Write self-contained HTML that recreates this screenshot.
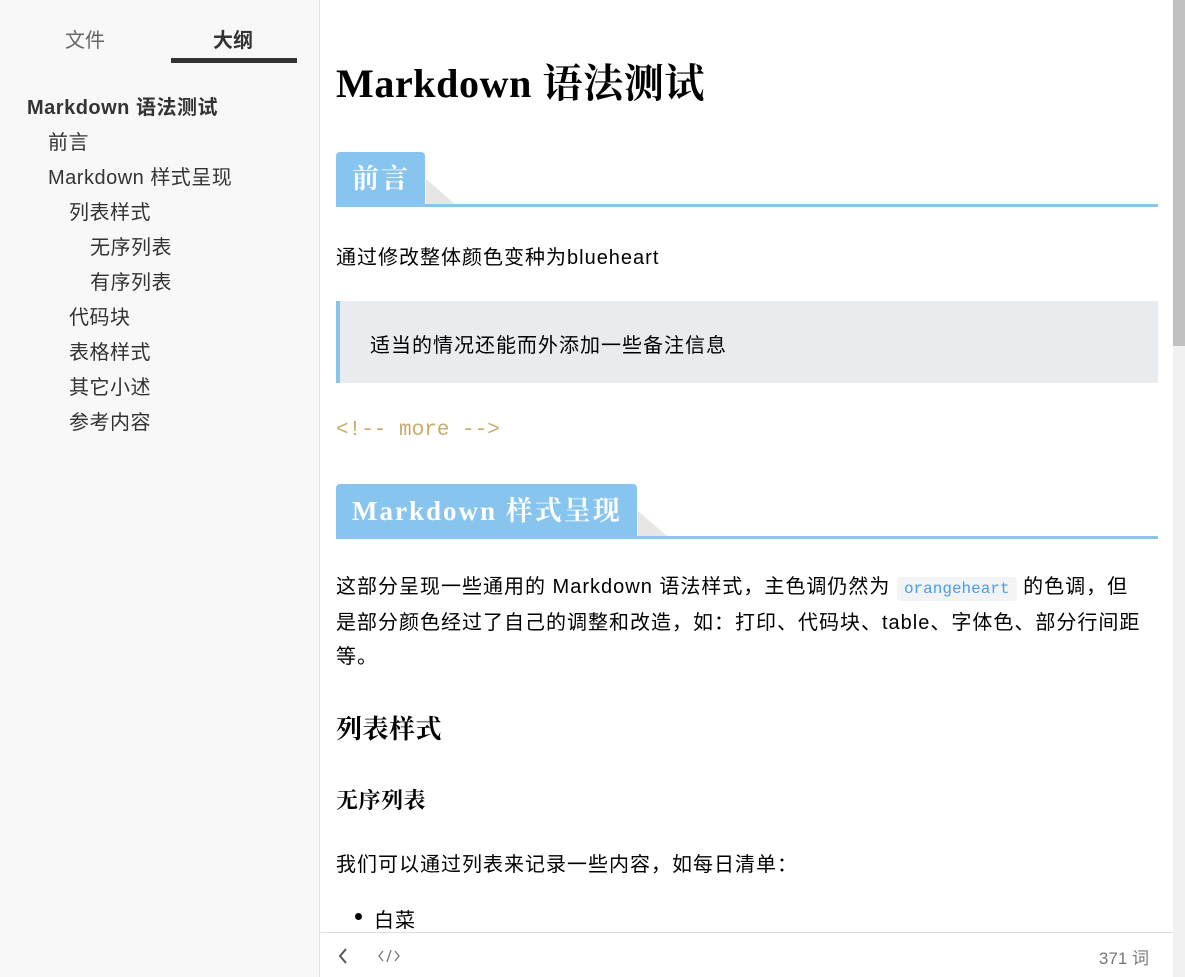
<!DOCTYPE html>
<html><head><meta charset="utf-8"><style>
*{margin:0;padding:0;box-sizing:border-box}
body{width:1185px;height:977px;overflow:hidden;background:#fff;font-family:"Liberation Sans","Noto Sans CJK SC",sans-serif;position:relative}
#side{position:absolute;left:0;top:0;width:320px;height:977px;background:#f8f8f8;border-right:1px solid #e5e5e5}
.tab{position:absolute;top:24px;font-size:20px;color:#666}
.ol{position:absolute;font-size:20px;color:#333;white-space:nowrap;letter-spacing:0.5px}
#main{position:absolute;left:321px;top:0;width:852px;height:932px;overflow:hidden}
.a{position:absolute;white-space:nowrap;font-size:20px;color:#000;letter-spacing:1px}
.hw{position:absolute;left:15px;display:flex;align-items:flex-end}
.h2{background:#87c4ee;color:#fff;font-family:"Liberation Serif","Noto Serif CJK SC",serif;font-weight:bold;font-size:27px;letter-spacing:2px;border-radius:4px 4px 0 0;padding:0 15px 0 16px;height:53px;line-height:55px;white-space:nowrap}
.line{position:absolute;left:15px;width:822px;height:3px;background:#87c4ee}
.tri{width:0;height:0;border-left:30px solid #e8e6e3;border-top:26px solid transparent;margin-left:1px}
#foot{position:absolute;left:321px;top:932px;width:852px;height:45px;border-top:1px solid #ddd;background:#fff}
#sb{position:absolute;left:1173px;top:0;width:12px;height:977px;background:#f1f1f1}
</style></head><body>
<div id="side">
<div class="tab" style="left:65px">文件</div>
<div class="tab" style="left:213px;color:#333;font-weight:bold">大纲</div>
<div style="position:absolute;left:171px;top:58px;width:126px;height:5px;background:#333"></div>
<div class="ol" style="left:27px;top:91px;font-weight:bold">Markdown 语法测试</div>
<div class="ol" style="left:48px;top:126px">前言</div>
<div class="ol" style="left:48px;top:161px">Markdown 样式呈现</div>
<div class="ol" style="left:69px;top:196px">列表样式</div>
<div class="ol" style="left:90px;top:231px">无序列表</div>
<div class="ol" style="left:90px;top:266px">有序列表</div>
<div class="ol" style="left:69px;top:301px">代码块</div>
<div class="ol" style="left:69px;top:336px">表格样式</div>
<div class="ol" style="left:69px;top:371px">其它小述</div>
<div class="ol" style="left:69px;top:406px">参考内容</div>
</div>
<div id="main">
<div class="a" style="left:15px;top:52px;font-family:'Liberation Serif','Noto Serif CJK SC',serif;font-weight:bold;font-size:40px;letter-spacing:0.6px">Markdown 语法测试</div>
<div class="hw" style="top:152px"><div class="h2">前言</div><div class="tri"></div></div>
<div class="line" style="top:204px"></div>
<div class="a" style="left:15px;top:241px">通过修改整体颜色变种为blueheart</div>
<div style="position:absolute;left:15px;top:301px;width:822px;height:82px;background:#e8ecef;border-left:4px solid #87c4ee"></div>
<div class="a" style="left:49px;top:329px">适当的情况还能而外添加一些备注信息</div>
<div class="a" style="left:15px;top:419px;font-family:'Liberation Mono',monospace;color:#c9ac6b;font-size:21px;letter-spacing:0">&lt;!-- more --&gt;</div>
<div class="hw" style="top:484px"><div class="h2">Markdown 样式呈现</div><div class="tri"></div></div>
<div class="line" style="top:536px"></div>
<div class="a" style="left:15px;top:570px;line-height:34px;white-space:normal;width:806px">这部分呈现一些通用的 Markdown 语法样式，主色调仍然为 <span style="font-family:'Liberation Mono',monospace;font-size:16px;letter-spacing:0;color:#4a9eea;background:#f1f3f5;border-radius:4px;padding:3px 7px">orangeheart</span> 的色调，但是部分颜色经过了自己的调整和改造，如：打印、代码块、table、字体色、部分行间距等。</div>
<div class="a" style="left:15px;top:709px;font-family:'Liberation Serif','Noto Serif CJK SC',serif;font-size:26px;font-weight:bold;letter-spacing:0.5px">列表样式</div>
<div class="a" style="left:15px;top:784px;font-family:'Liberation Serif','Noto Serif CJK SC',serif;font-size:22px;font-weight:bold;letter-spacing:0.5px">无序列表</div>
<div class="a" style="left:15px;top:848px">我们可以通过列表来记录一些内容，如每日清单：</div>
<div style="position:absolute;left:34px;top:913px;width:7px;height:7px;border-radius:50%;background:#000"></div>
<div class="a" style="left:53px;top:904px">白菜</div>
</div>
<div id="foot">
<svg style="position:absolute;left:16px;top:14px" width="12" height="18"><path d="M9 2 L3 9 L9 16" stroke="#555" stroke-width="2" fill="none"/></svg>
<svg style="position:absolute;left:56px;top:14px" width="24" height="18"><path d="M6 4 L2 9 L6 14 M18 4 L22 9 L18 14 M14 3 L10 15" stroke="#777" stroke-width="1.3" fill="none"/></svg>
<div style="position:absolute;right:24px;top:11px;font-size:17px;color:#777">371 词</div>
</div>
<div id="sb"><div style="width:12px;height:346px;background:#c1c1c1"></div></div>
</body></html>
